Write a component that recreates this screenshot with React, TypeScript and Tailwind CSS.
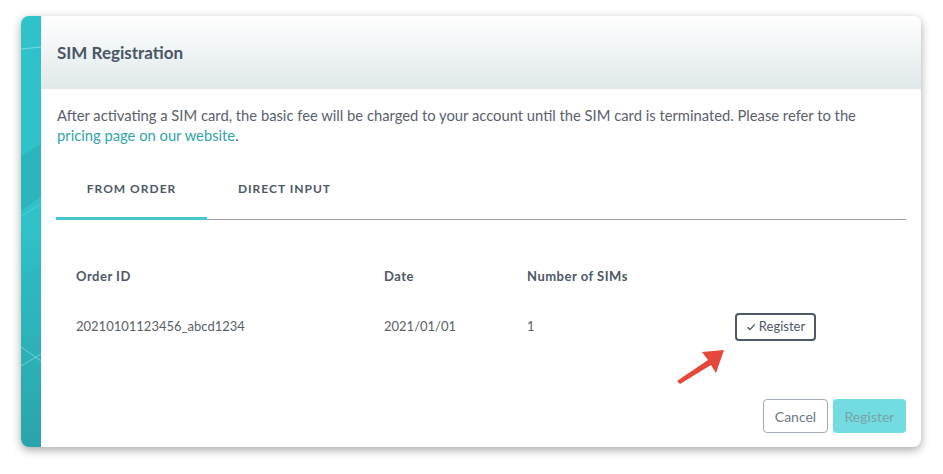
import React from "react";

const font = { fontFamily: '"Lato", "Liberation Sans", sans-serif' };

function Strip() {
    return (
        <div className="relative w-[20px] shrink-0 overflow-hidden bg-gradient-to-b from-[#2fc3cb] via-[#30c0c8] to-[#2aa4ab]">
            <svg className="absolute inset-0 h-full w-full" viewBox="0 0 20 431" preserveAspectRatio="none">
                <path d="M0 33 L20 31" stroke="#8fe3e7" strokeWidth="1" fill="none" opacity="0.8" />
                <path d="M0 140 L20 128 L20 180 L0 195 Z" fill="#27a8b0" opacity="0.5" />
                <path d="M0 200 L20 188" stroke="#7fd9de" strokeWidth="0.8" fill="none" opacity="0.6" />
                <path d="M0 331 L20 345 M0 350 L20 338" stroke="#9fe6ea" strokeWidth="0.8" fill="none" opacity="0.7" />
                <path d="M0 260 L20 250 L20 300 L0 305 Z" fill="#2bb6bd" opacity="0.5" />
            </svg>
        </div>
    );
}

function Arrow() {
    return (
        <svg className="pointer-events-none absolute left-[636px] top-[318px] h-[50px] w-[52px]" viewBox="0 0 52 50">
            <path d="M0 47 L31 26 L25 18 L47 16 L39 39 L34 31 L3 50 Z" fill="#e6473a" />
        </svg>
    );
}

export default function App() {
    return (
        <div className="min-h-screen bg-white pl-[21px] pt-[16px]" style={font}>
            <div className="flex h-[431px] w-[900px] overflow-hidden rounded-[8px] bg-white shadow-[0_3px_10px_rgba(0,0,0,0.35)]">
                <Strip />
                <div className="relative flex flex-1 flex-col">
                    <div className="flex h-[73px] items-center bg-gradient-to-b from-white to-[#e0e8ea] px-[16px]">
                        <h1 className="text-[17px] font-bold text-[#4a5565]">SIM Registration</h1>
                    </div>

                    <p className="px-[16px] pt-[16px] text-[14.75px] leading-[20px] text-[#58616d]">
                        After activating a SIM card, the basic fee will be charged to your account until the SIM card is terminated. Please refer to the
                        <br />
                        <span className="text-[#2ea5aa]">pricing page on our website</span>.
                    </p>

                    <div className="mx-[15px] mt-[16px] flex border-b border-[#9aa3ae]">
                        <div className="-mb-px flex h-[59px] w-[151px] items-center justify-center border-b-[3px] border-[#45c7d1] text-[12px] font-bold tracking-[1px] text-[#4e5867]">
                            FROM ORDER
                        </div>
                        <div className="-mb-px flex h-[59px] w-[155px] items-center justify-center border-b-[3px] border-transparent text-[12px] font-bold tracking-[1px] text-[#4e5867]">
                            DIRECT INPUT
                        </div>
                    </div>

                    <div className="mx-[35px] mt-[46px] text-[13px]">
                        <div className="flex h-[22px] items-center font-bold tracking-[0.5px] text-[#4e5867]">
                            <div className="w-[308px]">Order ID</div>
                            <div className="w-[143px]">Date</div>
                            <div className="w-[208px]">Number of SIMs</div>
                        </div>
                        <div className="mt-[22px] flex h-[34px] items-center text-[#5a5f66]">
                            <div className="w-[308px]">20210101123456_abcd1234</div>
                            <div className="w-[143px]">2021/01/01</div>
                            <div className="w-[208px]">1</div>
                            <button className="flex h-[28px] w-[81px] items-center justify-center gap-[3px] rounded-[4px] border-2 border-[#4d5a69] text-[13px] text-[#4f5865]">
                                <svg width="10" height="10" viewBox="0 0 10 10">
                                    <path d="M1.5 5.2 L4 7.6 L8.8 2.4" stroke="#4f5865" strokeWidth="1.4" fill="none" />
                                </svg>
                                Register
                            </button>
                        </div>
                    </div>

                    <div className="mt-auto flex justify-end gap-[5px] px-[15px] pb-[14px]">
                        <button className="h-[34px] w-[65px] rounded-[4px] border border-[#a3adb8] text-[14px] text-[#6d7886]">Cancel</button>
                        <button className="h-[34px] w-[73px] rounded-[4px] bg-[#72dce1] text-[14px] text-[#7aa2a8]">Register</button>
                    </div>

                    <Arrow />
                </div>
            </div>
        </div>
    );
}
